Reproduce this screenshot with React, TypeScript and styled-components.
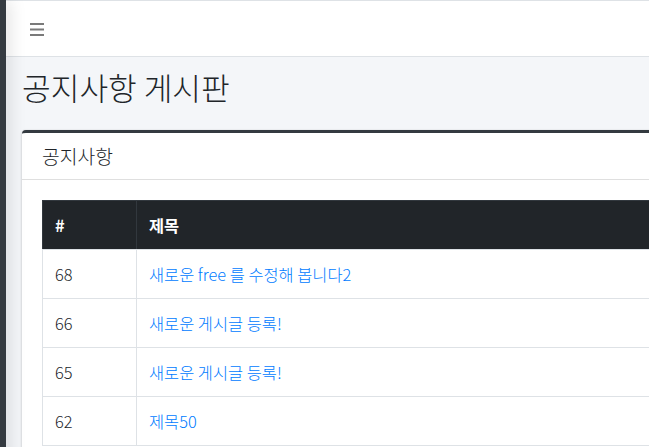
import { FC } from 'react';
import styled, { createGlobalStyle } from 'styled-components';

const GlobalStyle = createGlobalStyle`
    html, body {
        margin: 0;
        padding: 0;
        overflow: hidden;
    }
    body {
        font-family: 'Noto Sans CJK KR', 'Noto Sans', sans-serif;
        color: #212529;
        background: #f4f6f9;
    }
`

type Post = { id: number; title: string };

const posts: Post[] = [
    { id: 68, title: '새로운 free 를 수정해 봅니다2' },
    { id: 66, title: '새로운 게시글 등록!' },
    { id: 65, title: '새로운 게시글 등록!' },
    { id: 62, title: '제목50' },
];

const Hamburger: FC = () => (
    <svg width="14" height="13" viewBox="0 0 14 13">
        <rect x="0" y="0" width="14" height="2" fill="#7a7a7a" />
        <rect x="0" y="5.5" width="14" height="2" fill="#7a7a7a" />
        <rect x="0" y="11" width="14" height="2" fill="#7a7a7a" />
    </svg>
);

const App: FC = () => {
    return (
        <Wrapper>
            <GlobalStyle />
            <Sidebar />
            <Main>
                <Navbar>
                    <MenuButton>
                        <Hamburger />
                    </MenuButton>
                </Navbar>
                <Content>
                    <PageTitle>공지사항 게시판</PageTitle>
                    <Card>
                        <CardHeader>공지사항</CardHeader>
                        <CardBody>
                            <Table>
                                <thead>
                                    <tr>
                                        <Th width={94}>#</Th>
                                        <Th>제목</Th>
                                    </tr>
                                </thead>
                                <tbody>
                                    {posts.map((p) => (
                                        <tr key={p.id + p.title}>
                                            <Td>{p.id}</Td>
                                            <Td>
                                                <PostLink href="#">{p.title}</PostLink>
                                            </Td>
                                        </tr>
                                    ))}
                                </tbody>
                            </Table>
                        </CardBody>
                    </Card>
                </Content>
            </Main>
        </Wrapper>
    );
};

export default App;

const Wrapper = styled.div`
    display: flex;
    min-height: 447px;
    width: 1000px;
`

const Sidebar = styled.aside`
    width: 6px;
    flex-shrink: 0;
    background: #343a40;
    box-shadow: 0 0 18px rgba(0, 0, 0, 0.28);
    position: relative;
    z-index: 2;
`

const Main = styled.div`
    flex: 1;
    display: flex;
    flex-direction: column;
    background: #f4f6f9;
`

const Navbar = styled.nav`
    height: 55px;
    display: flex;
    align-items: center;
    padding: 0 24px;
    background: #fff;
    border-top: 1px solid #dee2e6;
    border-bottom: 1px solid #dee2e6;
`

const MenuButton = styled.div`
    display: flex;
    margin-top: 2px;
`

const Content = styled.main`
    padding: 11px 16px 0;
`

const PageTitle = styled.h1`
    margin: 0 0 24px;
    font-size: 31.2px;
    font-weight: 300;
    line-height: 38px;
    color: #212529;
`

const Card = styled.section`
    background: #fff;
    border-top: 3px solid #343a40;
    border-radius: 4px;
    box-shadow: 0 0 1px rgba(0, 0, 0, 0.125), 0 1px 3px rgba(0, 0, 0, 0.2);
`

const CardHeader = styled.div`
    padding: 12px 20px;
    font-size: 19.3px;
    font-weight: 300;
    line-height: 22px;
    border-bottom: 1px solid rgba(0, 0, 0, 0.125);
`

const CardBody = styled.div`
    padding: 20px;
`

const Table = styled.table`
    width: 100%;
    border-collapse: collapse;
    font-size: 16.4px;
`

const Th = styled.th<{ width?: number }>`
    ${({ width }) => width && `width: ${width}px;`}
    box-sizing: border-box;
    text-align: left;
    padding: 12px;
    line-height: 24px;
    font-weight: 700;
    color: #fff;
    background: #212529;
    border: 1px solid #32383e;
    border-bottom: 1px solid #dee2e6;
`

const Td = styled.td`
    padding: 12px;
    line-height: 24px;
    font-weight: 300;
    border: 1px solid #dee2e6;
    color: #212529;
`

const PostLink = styled.a`
    color: #007bff;
    text-decoration: none;
`
